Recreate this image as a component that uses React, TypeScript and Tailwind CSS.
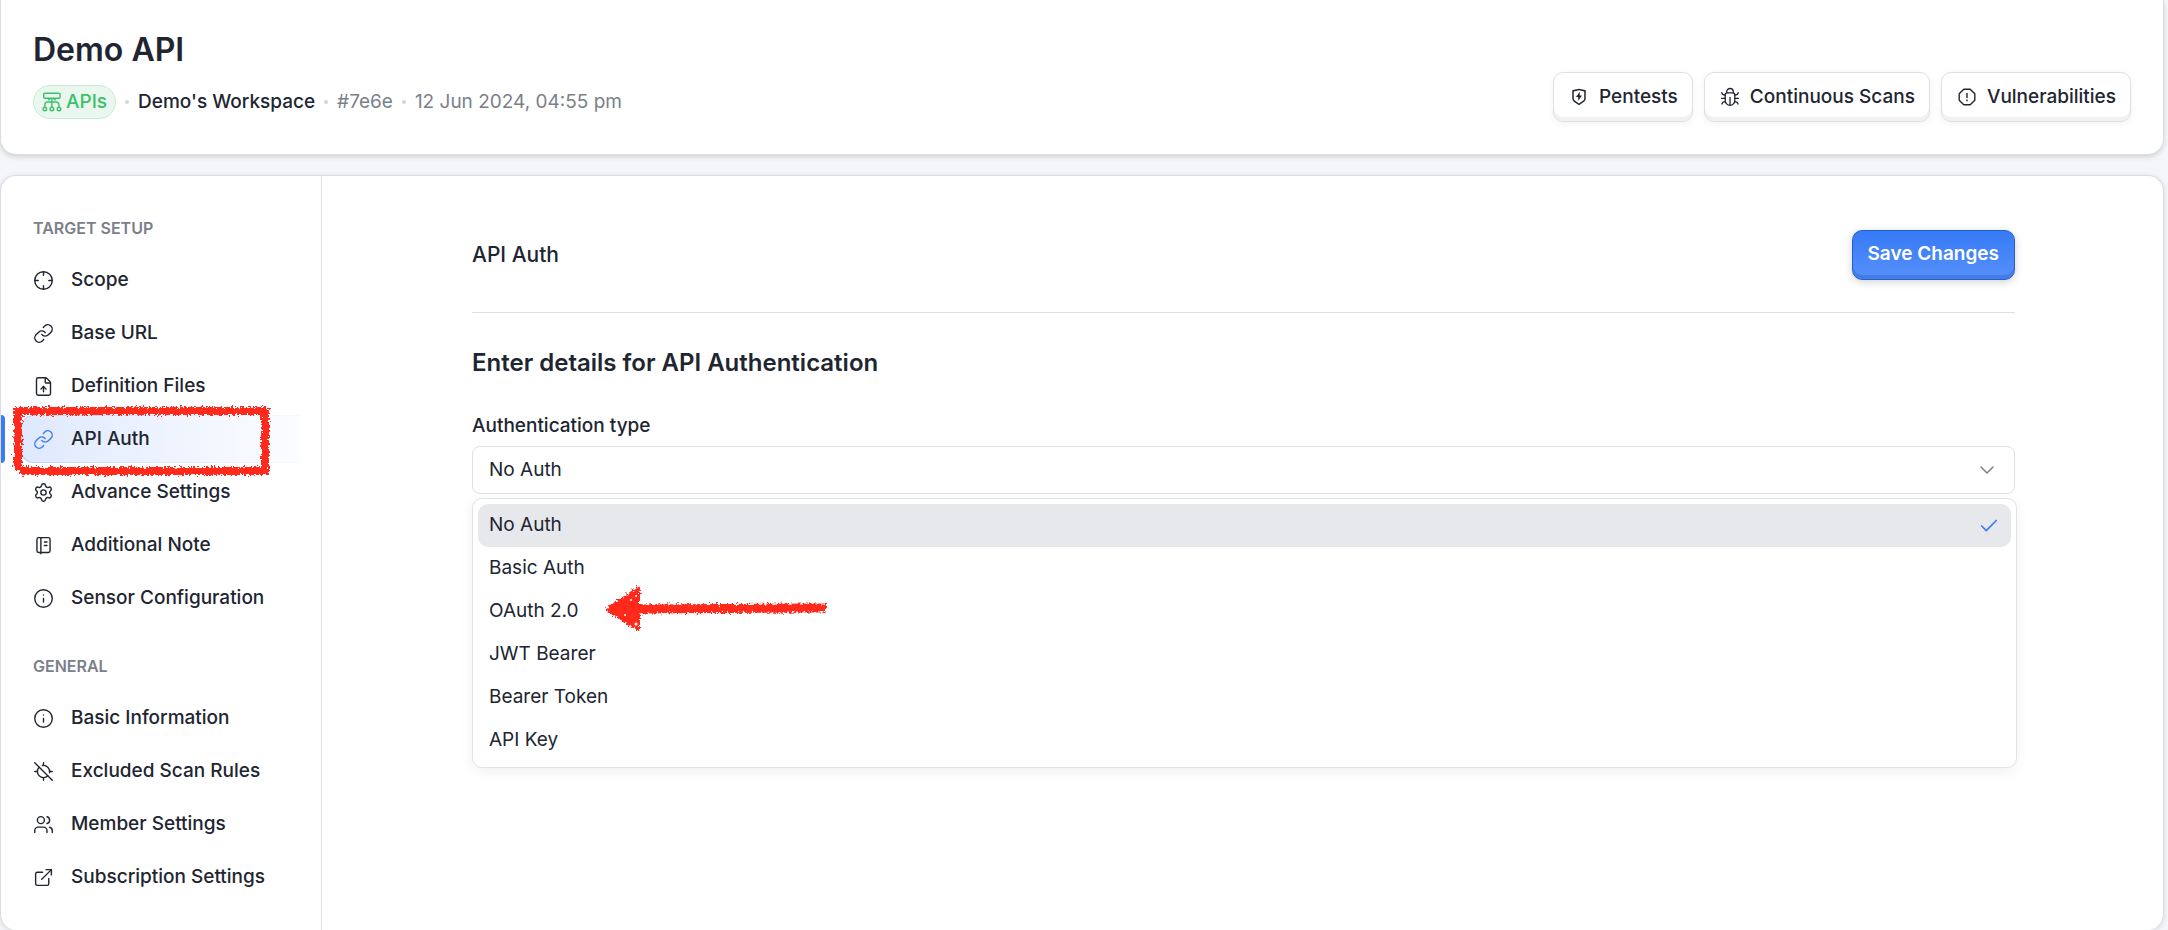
import React, { useState } from 'react';
import {
  Check,
  ChevronDown,
  Crosshair,
  ExternalLink,
  FileUp,
  Info,
  Link,
  LocateOff,
  Settings,
  Users,
} from 'lucide-react';
import { RiShieldFlashLine } from 'react-icons/ri';
import clsx from 'clsx';

type IconProps = { size?: number; strokeWidth?: number; className?: string };

function NoteIcon({ size = 21, className }: IconProps) {
  return (
    <svg width={size} height={size} viewBox="0 0 24 24" fill="none" stroke="currentColor" strokeWidth="1.6" strokeLinecap="round" strokeLinejoin="round" className={className}>
      <rect x="4.5" y="3" width="15" height="17" rx="2" />
      <path d="M9 3v18.500" />
      <path d="M13 8h3M13 12h3" />
    </svg>
  );
}

function BugIcon() {
  return (
    <svg width="20" height="20" viewBox="0 0 20 20" fill="none" stroke="currentColor" strokeWidth="1.3" strokeLinecap="round" strokeLinejoin="round">
      <path d="M6.700 5.800V4.800a3.300 3.300 0 0 1 6.600 0v1" />
      <path d="M7.200 5.800h5.600a2 2 0 0 1 2 2v5.700a4.800 4.800 0 0 1-9.600 0V7.800a2 2 0 0 1 2-2Z" />
      <path d="M10 10.500v7.500" />
      <path d="M1.500 11.300h3.700M14.800 11.300h3.700" />
      <path d="M1.800 5.600c.2 1.500 1.200 2.400 3.400 2.400M18.200 5.600c-.2 1.500-1.200 2.400-3.400 2.400" />
      <path d="M2 17c.2-1.500 1.200-2.400 3.400-2.400M18 17c-.2-1.500-1.200-2.400-3.400-2.400" />
    </svg>
  );
}

function OctagonIcon() {
  return (
    <svg width="20" height="20" viewBox="0 0 20 20" fill="none" stroke="currentColor" strokeWidth="1.4" strokeLinejoin="round">
      <path d="M6.800 2.200h6.400l4.600 4.600v6.400l-4.600 4.600H6.800l-4.600-4.600V6.800Z" />
      <path d="M10 6v5M10 12.600v1.600" />
    </svg>
  );
}

function ApiIcon() {
  return (
    <svg width="20" height="20" viewBox="0 0 20 20" fill="none" stroke="currentColor" strokeWidth="1.4">
      <rect x="1.700" y="1.200" width="16.400" height="5" rx="1.200" />
      <path d="M6.200 8.300 8.400 6.400M13.600 8.300 11.400 6.400M9.900 6.400v9M2.800 15v-1.600c0-2.200 1-3.400 3-3.400H14c2 0 3 1.200 3 3.400V15" />
      <circle cx="2.800" cy="17" r="1.800" />
      <circle cx="9.900" cy="17" r="1.800" />
      <circle cx="17" cy="17" r="1.800" />
    </svg>
  );
}

type NavItem = { label: string; icon: React.ComponentType<IconProps>; active?: boolean };

const targetSetup: NavItem[] = [
  { label: 'Scope', icon: Crosshair },
  { label: 'Base URL', icon: Link },
  { label: 'Definition Files', icon: FileUp },
  { label: 'API Auth', icon: Link, active: true },
  { label: 'Advance Settings', icon: Settings },
  { label: 'Additional Note', icon: NoteIcon },
  { label: 'Sensor Configuration', icon: Info },
];

const general: NavItem[] = [
  { label: 'Basic Information', icon: Info },
  { label: 'Excluded Scan Rules', icon: LocateOff },
  { label: 'Member Settings', icon: Users },
  { label: 'Subscription Settings', icon: ExternalLink },
];

const authTypes = ['No Auth', 'Basic Auth', 'OAuth 2.0', 'JWT Bearer', 'Bearer Token', 'API Key'];

function NavGroup({ title, items }: { title: string; items: NavItem[] }) {
  return (
    <section>
      <h2 className="pl-8 text-base leading-6 font-semibold text-[#7b7f8a] uppercase">{title}</h2>
      <ul className="mt-4 flex flex-col gap-[5px]">
        {items.map(({ label, icon: Icon, active }) => (
          <li key={label} className="relative pr-5 pl-5">
            {active && <span className="absolute top-0 left-0 h-full w-1 rounded-r bg-[#3a7bf7]" />}
            <div className={clsx('rounded-l-xl py-px pl-px', active && 'bg-linear-to-r from-[#bcd2fc] to-[#f6f9ff]')}>
              <a
                href="#"
                className={clsx(
                  'flex h-[46px] items-center gap-[17px] rounded-l-xl pl-[11px] text-[19px] font-medium',
                  active && 'bg-linear-to-r from-[#dfe9fd] to-[#fcfdff]',
                )}
              >
                <Icon size={21} strokeWidth={1.6} className={clsx('shrink-0', active && 'text-[#3a7bf7]')} />
                {label}
              </a>
            </div>
            {active && <RedFrame />}
          </li>
        ))}
      </ul>
    </section>
  );
}

// crayon look shared by the frame and the arrow
function Crayon({ id }: { id: string }) {
  return (
    <filter id={id} x="-5%" y="-20%" width="110%" height="140%" colorInterpolationFilters="sRGB">
      <feTurbulence type="fractalNoise" baseFrequency="0.45" numOctaves="2" seed="4" result="noise" />
      <feDisplacementMap in="SourceGraphic" in2="noise" scale="7" xChannelSelector="R" yChannelSelector="G" />
    </filter>
  );
}

function RedFrame() {
  return (
    <svg width="264" height="76" viewBox="0 0 264 76" fill="none" stroke="#ff2a1c" aria-hidden="true" className="pointer-events-none absolute -top-3 left-2 z-20">
      <defs>
        <Crayon id="crayon-frame" />
      </defs>
      <g filter="url(#crayon-frame)" strokeWidth="8">
        <path d="M5 8H260" />
        <path d="M256 5V71" />
        <path d="M260 68H11" />
        <path d="M9 67V6" />
      </g>
    </svg>
  );
}

function RedArrow() {
  return (
    <svg width="228" height="50" viewBox="0 0 228 50" aria-hidden="true" className="pointer-events-none absolute top-[85px] left-[130px] z-20">
      <defs>
        <Crayon id="crayon-arrow" />
      </defs>
      <g filter="url(#crayon-arrow)" fill="#ff2a1c" stroke="#ff2a1c">
        <path d="M5 25.500 35 5v40Z" strokeWidth="4" strokeLinejoin="round" />
        <path d="M34 25 223 24" strokeWidth="9" />
      </g>
      <g fill="#fff">
        <circle cx="33" cy="40" r="1.500" />
        <circle cx="28" cy="16" r="1" />
        <circle cx="22" cy="31" r="1" />
        <circle cx="33" cy="12" r="1" />
      </g>
    </svg>
  );
}

function HeaderButton({ icon, children }: { icon: React.ReactNode; children: React.ReactNode }) {
  return (
    <button
      type="button"
      className="flex h-[50px] items-center gap-[10px] rounded-[10px] border border-[#dfe0e3] bg-white pr-[14px] pl-[15px] text-[19px] font-medium shadow-[inset_0_-4px_0_#f1f1f2,0_2px_8px_rgba(0,0,0,0.05)]"
    >
      <span className="grid size-5 place-items-center">{icon}</span>
      {children}
    </button>
  );
}

const dot = <span className="size-1 rounded-full bg-[#d5d6da]" />;

export default function App() {
  const [authType, setAuthType] = useState('No Auth');

  return (
    <div className="flex min-h-screen flex-col gap-5 overflow-hidden bg-[#f5f6f9] pr-1 font-['Inter',sans-serif] text-[#202531]">
      <header className="flex items-end justify-between rounded-b-2xl border-x border-b border-[#dcdde1] bg-white px-8 pt-[30px] pb-8 shadow-[0_2px_5px_rgba(20,25,40,0.16)]">
        <div className="pb-[3px]">
          <h1 className="text-[32px] leading-10 font-semibold">Demo API</h1>
          <div className="mt-[15px] flex items-center gap-[9px] text-[19px] leading-6">
            <span className="flex h-[34px] items-center gap-1 rounded-full border border-[#c6ecd3] bg-[#eaf7ef] px-2 font-medium text-[#3dbf6c]">
              <ApiIcon />
              APIs
            </span>
            {dot}
            <span className="font-medium">Demo's Workspace</span>
            {dot}
            <span className="text-[#7b7f8a]">#7e6e</span>
            {dot}
            <span className="text-[#7b7f8a]">12 Jun 2024, 04:55 pm</span>
          </div>
        </div>
        <div className="flex gap-[11px]">
          <HeaderButton icon={<RiShieldFlashLine size={18} />}>Pentests</HeaderButton>
          <HeaderButton icon={<BugIcon />}>Continuous Scans</HeaderButton>
          <HeaderButton icon={<OctagonIcon />}>Vulnerabilities</HeaderButton>
        </div>
      </header>

      <div className="flex flex-1 rounded-2xl border border-b-0 border-[#dcdde1] bg-white shadow-[0_1px_5px_rgba(20,25,40,0.14)]">
        <nav className="flex w-[321px] shrink-0 flex-col gap-8 border-r border-[#dfe0e4] pt-10 pb-7">
          <NavGroup title="Target Setup" items={targetSetup} />
          <NavGroup title="General" items={general} />
        </nav>

        <main className="flex-1 pt-[54px] pr-[148px] pl-[150px]">
          <div className="flex items-center justify-between border-b border-[#dfe0e4] pb-8">
            <h2 className="text-[21px] font-medium">API Auth</h2>
            <button
              type="button"
              className="h-[50px] rounded-[10px] border border-[#2560cf] bg-linear-to-b from-[#357af6] to-[#5790fa] px-[15px] pb-[2px] text-[19px] font-semibold text-white shadow-[inset_0_-4px_0_#437de8,0_2px_8px_rgba(0,0,0,0.18)]"
            >
              Save Changes
            </button>
          </div>

          <h3 className="mt-[34px] text-2xl leading-8 font-semibold">Enter details for API Authentication</h3>
          <label htmlFor="auth-type" className="mt-[35px] block text-[19px] leading-6 font-medium">
            Authentication type
          </label>
          <div className="relative mt-2">
            <select
              id="auth-type"
              value={authType}
              onChange={(e) => setAuthType(e.target.value)}
              className="block h-12 w-full appearance-none rounded-lg border border-[#dfe0e3] bg-white px-4 text-[19px] outline-none"
            >
              {authTypes.map((type) => (
                <option key={type}>{type}</option>
              ))}
            </select>
            <ChevronDown size={24} strokeWidth={1.5} className="pointer-events-none absolute top-3 right-4 text-[#7b7f8a]" />

            <div className="absolute top-full -right-[2px] left-0 mt-1 rounded-[10px] border border-[#e2e3e6] bg-white p-[5px] text-[19px] shadow-[0_4px_14px_rgba(0,0,0,0.06)]">
              <ul role="listbox" aria-label="Authentication type">
                {authTypes.map((type) => (
                  <li
                    key={type}
                    role="option"
                    aria-selected={type === authType}
                    onClick={() => setAuthType(type)}
                    className={clsx('flex h-[43px] items-center justify-between rounded-[10px] px-[11px]', type === authType && 'bg-[#e7e8ec]')}
                  >
                    {type}
                    {type === authType && <Check size={22} strokeWidth={1.8} className="text-[#3a7bf7]" />}
                  </li>
                ))}
              </ul>
              <RedArrow />
            </div>
          </div>
        </main>
      </div>
    </div>
  );
}
